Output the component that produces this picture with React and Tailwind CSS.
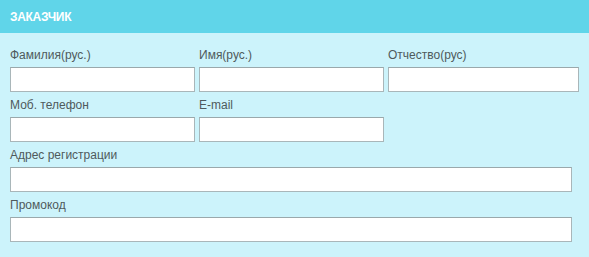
import React from "react";

function Field({ label, className = "" }) {
  return (
    <div className={className}>
      <div className="text-[12px] leading-[14px] text-[#4f5a5c] mb-[5px] pl-[-1px]">{label}</div>
      <div className="h-[25px] bg-white border border-[#a9b6b9] border-t-[#9aa8ab] mb-[6px]" />
    </div>
  );
}

export default function App() {
  return (
    <div className="w-[589px] h-[257px] bg-[#ccf3fb] font-['Liberation_Sans',Arial,sans-serif] overflow-hidden">
      <div className="h-[33px] bg-[#60d5e9] flex items-center pl-[10px] pt-[1px]">
        <span className="text-white font-bold text-[12px] tracking-[-0.3px]">ЗАКАЗЧИК</span>
      </div>
      <div className="pt-[15px] pl-[10px]">
        <div className="grid grid-cols-[185px_185px_191px] gap-x-[4px]">
          <Field label="Фамилия(рус.)" />
          <Field label="Имя(рус.)" />
          <Field label="Отчество(рус)" />
          <Field label="Моб. телефон" />
          <Field label="E-mail" />
        </div>
        <Field label="Адрес регистрации" className="w-[562px]" />
        <Field label="Промокод" className="w-[562px]" />
      </div>
    </div>
  );
}
